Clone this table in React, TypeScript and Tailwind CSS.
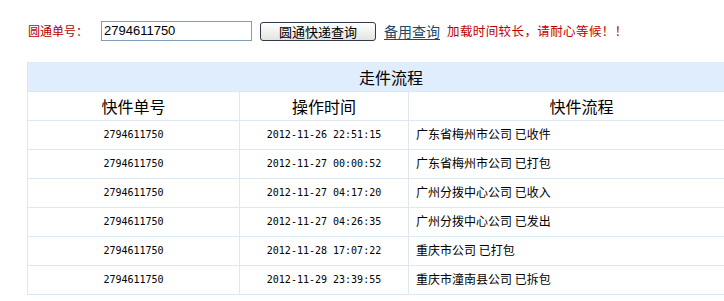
import React from "react";

const rows = [
  ["2794611750", "2012-11-26 22:51:15", "广东省梅州市公司 已收件"],
  ["2794611750", "2012-11-27 00:00:52", "广东省梅州市公司 已打包"],
  ["2794611750", "2012-11-27 04:17:20", "广州分拨中心公司 已收入"],
  ["2794611750", "2012-11-27 04:26:35", "广州分拨中心公司 已发出"],
  ["2794611750", "2012-11-28 17:07:22", "重庆市公司 已打包"],
  ["2794611750", "2012-11-29 23:39:55", "重庆市潼南县公司 已拆包"],
];

const cjk = { fontFamily: '"Noto Sans CJK SC", "Liberation Sans", sans-serif' };
const mono = { fontFamily: '"DejaVu Sans Mono", "Liberation Mono", monospace' };

export default function App() {
  return (
    <div className="w-[724px] h-[301px] overflow-hidden bg-white" style={cjk}>
      <div className="flex items-center h-[20px] mt-[21px] pl-[28px]">
        <span className="text-[12px] text-[#b80000] w-[73px]">圆通单号：</span>
        <div className="w-[151px] h-[20px] border border-[#7f9db9] flex items-center pl-[2px] text-[13px] text-black" style={{ fontFamily: '"Liberation Sans", sans-serif' }}>
          2794611750
        </div>
        <button className="ml-[8px] w-[116px] h-[19px] rounded-[3px] border border-[#2f3b4c] bg-gradient-to-b from-white to-[#e4e4de] text-[13px] text-black flex items-center justify-center leading-none">
          圆通快递查询
        </button>
        <a className="ml-[8px] text-[14px] text-[#1c4a6b] underline underline-offset-2 leading-none">备用查询</a>
        <span className="ml-[7px] text-[12.5px] tracking-[0.4px] text-[#c00000]">加载时间较长，请耐心等候！！</span>
      </div>
      <table className="mt-[21px] ml-[27px] w-[728px] border-collapse table-fixed text-black">
        <colgroup>
          <col className="w-[212px]" />
          <col className="w-[169px]" />
          <col />
        </colgroup>
        <thead>
          <tr className="h-[29px] bg-[#dfedfc]">
            <th colSpan={3} className="font-normal text-[16px] border border-[#dce8f2]">走件流程</th>
          </tr>
          <tr className="h-[29px]">
            <th className="font-normal text-[16px] border border-[#dce8f2]">快件单号</th>
            <th className="font-normal text-[16px] border border-[#dce8f2]">操作时间</th>
            <th className="font-normal text-[16px] border border-[#dce8f2]">快件流程</th>
          </tr>
        </thead>
        <tbody>
          {rows.map((r, i) => (
            <tr key={i} className="h-[29px]">
              <td className="border border-[#dce8f2] text-center text-[10px] pb-[2px]" style={mono}>{r[0]}</td>
              <td className="border border-[#dce8f2] text-center text-[10px] pb-[2px]" style={mono}>{r[1]}</td>
              <td className="border border-[#dce8f2] text-left pl-[7px] text-[12px] pb-[2px]">{r[2]}</td>
            </tr>
          ))}
        </tbody>
      </table>
    </div>
  );
}
